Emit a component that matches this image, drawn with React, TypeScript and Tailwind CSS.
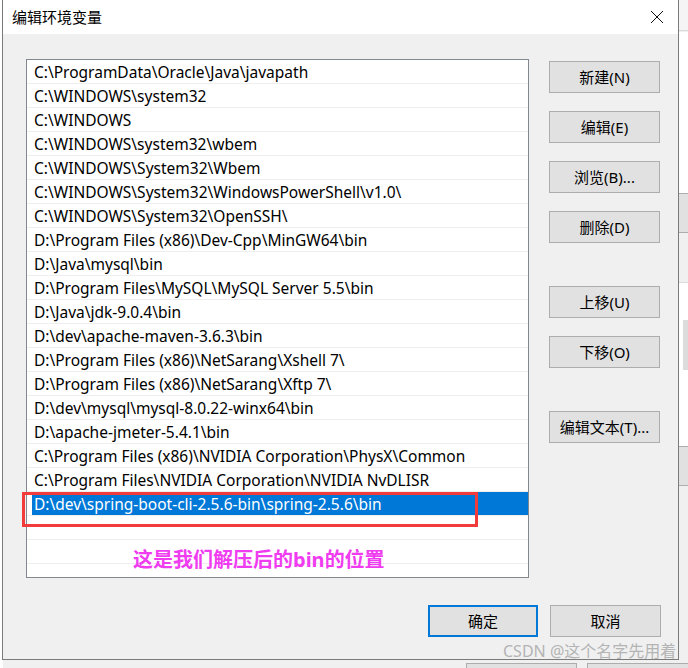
import React from "react";

const rows = [
  "C:\\ProgramData\\Oracle\\Java\\javapath",
  "C:\\WINDOWS\\system32",
  "C:\\WINDOWS",
  "C:\\WINDOWS\\system32\\wbem",
  "C:\\WINDOWS\\System32\\Wbem",
  "C:\\WINDOWS\\System32\\WindowsPowerShell\\v1.0\\",
  "C:\\WINDOWS\\System32\\OpenSSH\\",
  "D:\\Program Files (x86)\\Dev-Cpp\\MinGW64\\bin",
  "D:\\Java\\mysql\\bin",
  "D:\\Program Files\\MySQL\\MySQL Server 5.5\\bin",
  "D:\\Java\\jdk-9.0.4\\bin",
  "D:\\dev\\apache-maven-3.6.3\\bin",
  "D:\\Program Files (x86)\\NetSarang\\Xshell 7\\",
  "D:\\Program Files (x86)\\NetSarang\\Xftp 7\\",
  "D:\\dev\\mysql\\mysql-8.0.22-winx64\\bin",
  "D:\\apache-jmeter-5.4.1\\bin",
  "C:\\Program Files (x86)\\NVIDIA Corporation\\PhysX\\Common",
  "C:\\Program Files\\NVIDIA Corporation\\NVIDIA NvDLISR",
];

const selected = "D:\\dev\\spring-boot-cli-2.5.6-bin\\spring-2.5.6\\bin";

function Btn({ label, className = "" }: { label: string; className?: string }) {
  return (
    <div
      className={
        "w-[111px] h-[32px] flex items-center justify-center bg-[#e1e1e1] border border-[#adadad] text-[15px] text-black " +
        className
      }
    >
      {label}
    </div>
  );
}

export default function App() {
  return (
    <div
      className="relative w-[688px] h-[668px] overflow-hidden bg-[#f0f0f0]"
      style={{ fontFamily: '"Noto Sans", "Noto Sans CJK SC", sans-serif' }}
    >
      {/* background windows */}
      <div className="absolute left-0 top-0 w-[3px] h-[668px] bg-white" />
      <div className="absolute left-[679px] top-0 w-[9px] h-[31px] bg-[#f5f5f5] border-b border-[#dadada]" />
      <div className="absolute left-[679px] top-[32px] w-[9px] h-[161px] bg-white" />
      <div className="absolute left-[679px] top-[193px] w-[9px] h-[40px] bg-[#e1e1e1] border-y border-[#adadad]" />
      <div className="absolute left-[679px] top-[233px] w-[9px] h-[50px] bg-[#f0f0f0] border-b border-[#dadada]" />
      <div className="absolute left-[679px] top-[283px] w-[9px] h-[163px] bg-white" />
      <div className="absolute left-[683px] top-[320px] w-[5px] h-[50px] bg-[#dcdcdc]" />
      <div className="absolute left-[679px] top-[446px] w-[9px] h-[40px] bg-[#e1e1e1] border-y border-[#adadad]" />
      <div className="absolute left-[466px] top-[663px] w-[111px] h-[10px] bg-[#e1e1e1] border border-[#adadad]" />
      <div className="absolute left-[587px] top-[663px] w-[111px] h-[10px] bg-[#e1e1e1] border border-[#adadad]" />

      {/* dialog */}
      <div className="absolute left-[2px] top-0 w-[677px] h-[660px] border-x border-b border-[#7a7a7a] bg-[#f0f0f0] flex flex-col">
        <div className="h-[34px] bg-white flex items-center justify-between pl-[9px] pr-[14px]">
          <span className="text-[15px] text-black">编辑环境变量</span>
          <svg width="14" height="14" viewBox="0 0 14 14">
            <path d="M1 1 L13 13 M13 1 L1 13" stroke="#111" strokeWidth="1" fill="none" />
          </svg>
        </div>
        <div className="flex-1 flex flex-col">
          <div className="flex pl-[23px] pt-[25px]">
            <div className="relative w-[503px] h-[519px] bg-white border border-[#828790] flex flex-col">
              {rows.map((r) => (
                <div
                  key={r}
                  className="h-[24px] shrink-0 border-b border-[#eeeeee] pl-[7px] pt-[2px] flex items-center text-[15.5px] text-black whitespace-nowrap"
                >
                  {r}
                </div>
              ))}
              <div className="h-[24px] shrink-0 border-b border-[#eeeeee] pl-[5px] flex items-stretch">
                <div className="flex-1 bg-[#0078d7] text-white text-[15.5px] flex items-center pl-[2px] pt-[2px] whitespace-nowrap">
                  {selected}
                </div>
              </div>
              <div className="h-[24px] shrink-0 border-b border-[#eeeeee]" />
              <div className="h-[24px] shrink-0 border-b border-[#eeeeee]" />
              {/* annotation overlays */}
              <div className="absolute left-[-5px] top-[432px] w-[456px] h-[35px] border-[3px] border-[#f23c3c]" />
              <div className="absolute left-[106px] top-[490px] text-[20px] font-semibold text-[#f03cf0] whitespace-nowrap leading-none">
                这是我们解压后的<span className="font-bold">bin</span>的位置
              </div>
            </div>
            <div className="ml-[20px] pt-[2px] flex flex-col">
              <Btn label="新建(N)" />
              <Btn label="编辑(E)" className="mt-[18px]" />
              <Btn label="浏览(B)..." className="mt-[18px]" />
              <Btn label="删除(D)" className="mt-[18px]" />
              <Btn label="上移(U)" className="mt-[43px]" />
              <Btn label="下移(O)" className="mt-[18px]" />
              <Btn label="编辑文本(T)..." className="mt-[43px]" />
            </div>
          </div>
          <div className="flex justify-end gap-[12px] pr-[17px] mt-[27px]">
            <div className="w-[110px] h-[32px] flex items-center justify-center bg-[#e1e1e1] border-2 border-[#0078d7] text-[15px] text-black">
              确定
            </div>
            <Btn label="取消" />
          </div>
        </div>
      </div>

      {/* watermark */}
      <div className="absolute left-[503px] top-[641px] text-[16px] leading-[20px] text-[#b4b4b4] whitespace-nowrap">
        CSDN @这个名字先用着
      </div>
    </div>
  );
}
